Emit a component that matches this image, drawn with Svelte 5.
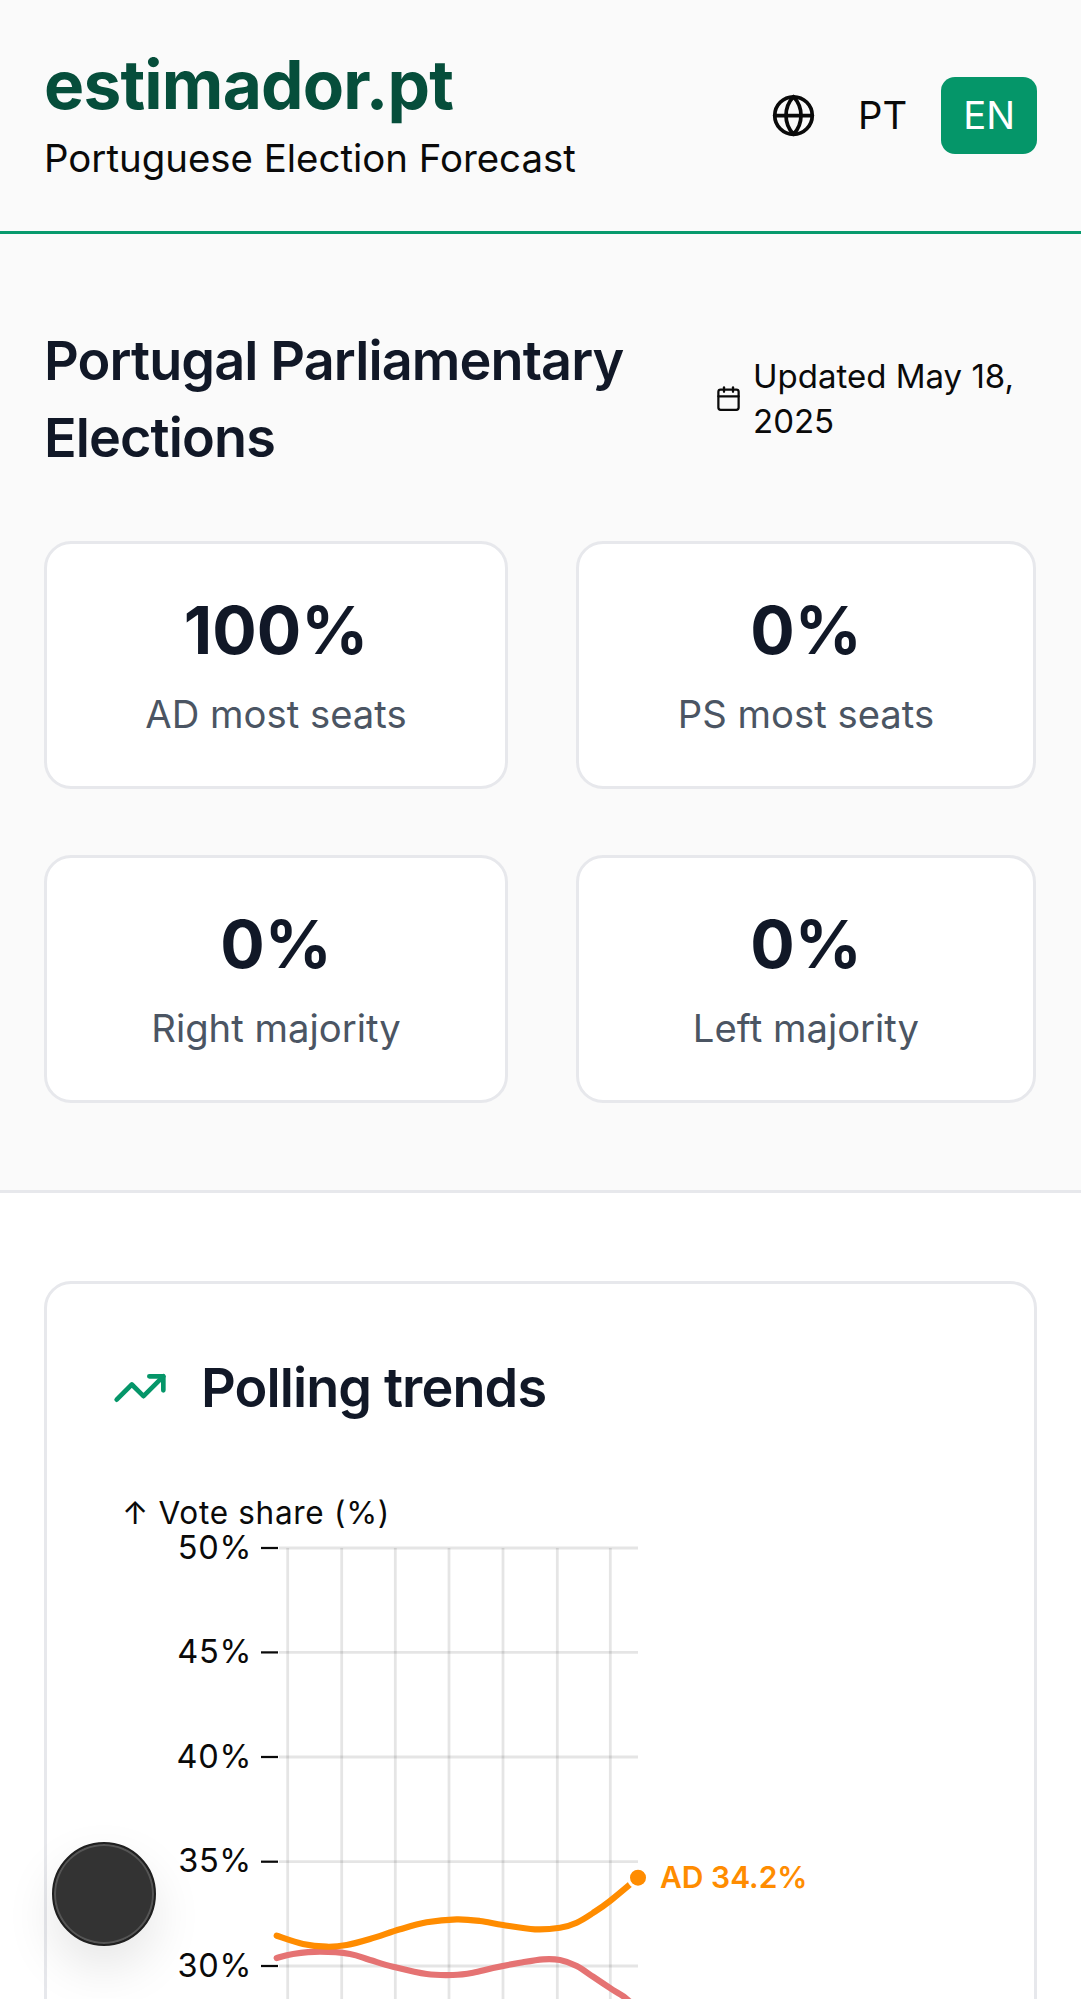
<script>
  const stats = [
    { value: '100%', label: 'AD most seats' },
    { value: '0%', label: 'PS most seats' },
    { value: '0%', label: 'Right majority' },
    { value: '0%', label: 'Left majority' }
  ];
  const ticks = [
    { label: '50%', y: 1548 },
    { label: '45%', y: 1652.4 },
    { label: '40%', y: 1757 },
    { label: '35%', y: 1861.7 },
    { label: '30%', y: 1966 }
  ];
  const gridX = [287.7, 341.7, 395.3, 449, 503, 557.3, 610.3];
  const orange = [[276.7,1935.7],[303,1944],[326.7,1946.7],[346.7,1945],[370,1939],[400,1929.3],[426.7,1922.3],[456.7,1919.3],[480,1921],[503,1925],[535,1929.3],[560,1927.7],[576.7,1922.7],[593,1913],[610,1901],[638,1877.7]];
  const red = [[276.7,1958],[293,1954],[320,1951.7],[350,1954],[370,1960],[393,1966.7],[426.7,1974],[453,1975],[473,1972.7],[493,1968],[520,1962.7],[543,1959.3],[560,1960],[576.7,1966],[593,1976.7],[613,1990],[628,2000],[660,2030]];

  function spline(p) {
    let d = `M${p[0][0]} ${p[0][1]}`;
    for (let i = 0; i < p.length - 1; i++) {
      const a = p[Math.max(i - 1, 0)], b = p[i], c = p[i + 1], e = p[Math.min(i + 2, p.length - 1)];
      const c1 = [b[0] + (c[0] - a[0]) / 6, b[1] + (c[1] - a[1]) / 6];
      const c2 = [c[0] - (e[0] - b[0]) / 6, c[1] - (e[1] - b[1]) / 6];
      d += `C${c1[0].toFixed(1)} ${c1[1].toFixed(1)} ${c2[0].toFixed(1)} ${c2[1].toFixed(1)} ${c[0]} ${c[1]}`;
    }
    return d;
  }
</script>

<div class="page">
  <header class="header">
    <div class="brand">
      <h1>estimador.pt</h1>
      <p>Portuguese Election Forecast</p>
    </div>
    <div class="lang">
      <svg class="globe" viewBox="0 0 24 24" fill="none" stroke="currentColor" stroke-width="2" stroke-linecap="round" stroke-linejoin="round">
        <circle cx="12" cy="12" r="10" />
        <path d="M12 2a14.5 14.5 0 0 0 0 20 14.5 14.5 0 0 0 0-20" />
        <path d="M2 12h20" />
      </svg>
      <button class="lang-btn">PT</button>
      <button class="lang-btn active">EN</button>
    </div>
  </header>

  <section class="summary">
    <div class="title-row">
      <h2>Portugal Parliamentary Elections</h2>
      <div class="updated">
        <svg class="calendar" viewBox="0 0 24 24" fill="none" stroke="currentColor" stroke-width="2" stroke-linecap="round" stroke-linejoin="round">
          <path d="M8 2v4" /><path d="M16 2v4" />
          <rect x="3" y="4" width="18" height="18" rx="2" />
          <path d="M3 10h18" />
        </svg>
        <span>Updated May 18, 2025</span>
      </div>
    </div>
    <div class="stats">
      {#each stats as s}
        <div class="stat">
          <div class="value">{s.value}</div>
          <div class="label">{s.label}</div>
        </div>
      {/each}
    </div>
  </section>

  <main class="content">
    <div class="card">
      <div class="card-head">
        <svg class="trend" viewBox="0 0 24 24" fill="none" stroke="currentColor" stroke-width="2" stroke-linecap="round" stroke-linejoin="round">
          <polyline points="22 7 13.5 15.5 8.5 10.5 2 17" />
          <polyline points="16 7 22 7 22 13" />
        </svg>
        <h3>Polling trends</h3>
      </div>
      <svg class="chart" viewBox="100 1470 880 600" width="880" height="600">
        <text class="axis" x="122" y="1524">↑ Vote share (%)</text>
        {#each gridX as x}
          <line class="grid" x1={x} x2={x} y1="1548" y2="2070" />
        {/each}
        {#each ticks as t}
          <line class="grid" x1="279" x2="638" y1={t.y} y2={t.y} />
          <line class="tick" x1="261" x2="278" y1={t.y} y2={t.y} />
          <text class="axis tick-label" x="252" y={t.y + 10.5} text-anchor="end">{t.label}</text>
        {/each}
        <path class="series" d={spline(red)} stroke="#e57373" />
        <path class="series" d={spline(orange)} stroke="#ff8c00" />
        <circle cx="638" cy="1877.7" r="11" fill="#fff" />
        <circle cx="638" cy="1877.7" r="8" fill="#ff8c00" />
        <text class="end-label" x="660" y="1887.5">AD 34.2%</text>
      </svg>
    </div>
  </main>

  <button class="fab" aria-label="Open"></button>
</div>

<style>
  :global(body) {
    margin: 0;
    background: #fff;
  }
  .page {
    position: relative;
    height: 1999px;
    overflow: hidden;
    font-family: Inter, "Liberation Sans", sans-serif;
    color: #0a0a0a;
    background: #fff;
  }
  .header {
    box-sizing: border-box;
    height: 234px;
    padding: 0 44px;
    display: flex;
    align-items: center;
    justify-content: space-between;
    background: #fafafa;
    border-bottom: 3px solid #079a6d;
  }
  .brand {
    padding-top: 3px;
  }
  h1 {
    margin: 0;
    font-size: 67.5px;
    line-height: 72px;
    font-weight: 700;
    letter-spacing: -0.8px;
    color: #064e3b;
  }
  .brand p {
    margin: 10px 0 0;
    font-size: 38.4px;
    line-height: 54px;
  }
  .lang {
    display: flex;
    align-items: center;
    gap: 12px;
    margin-bottom: 1px;
  }
  .globe {
    width: 45px;
    height: 45px;
    margin-right: 8.5px;
    color: #0a0a0a;
  }
  .lang-btn {
    box-sizing: border-box;
    height: 77px;
    padding: 0 22px;
    border: 0;
    border-radius: 14px;
    background: transparent;
    color: #0a0a0a;
    font: 400 38.25px Inter, sans-serif;
  }
  .lang-btn.active {
    background: #059669;
    color: #fff;
  }
  .summary {
    box-sizing: border-box;
    height: 959px;
    padding: 89px 44px 0;
    background: #fafafa;
    border-bottom: 3px solid #e7e8ec;
  }
  .title-row {
    display: flex;
    align-items: center;
    justify-content: space-between;
    gap: 60px;
  }
  h2 {
    margin: 0;
    flex: 0 0 600px;
    font-size: 54px;
    line-height: 76.5px;
    font-weight: 600;
    letter-spacing: -0.9px;
    color: #111827;
  }
  .updated {
    display: flex;
    align-items: center;
    gap: 11px;
    width: 322px;
    font-size: 33px;
    line-height: 45px;
    margin-top: -2px;
  }
  .calendar {
    flex: none;
    width: 27px;
    height: 27px;
  }
  .stats {
    margin-top: 65px;
    margin-right: 1px;
    display: grid;
    grid-template-columns: 464fr 460fr;
    gap: 66px 68px;
  }
  .stat {
    box-sizing: border-box;
    height: 248px;
    padding: 48px 20px 0;
    text-align: center;
    background: #fff;
    border: 3px solid #e7e8ec;
    border-radius: 27px;
  }
  .value {
    font-size: 66px;
    line-height: 76px;
    font-weight: 700;
    color: #111827;
  }
  .label {
    margin-top: 19px;
    font-size: 38.25px;
    line-height: 54px;
    color: #4b5563;
  }
  .content {
    padding: 88px 44px 0;
    background: #fff;
  }
  .card {
    box-sizing: border-box;
    height: 1000px;
    padding: 66px 0 0 53px;
    border: 3px solid #e7e8ec;
    border-radius: 27px;
    background: #fff;
  }
  .card-head {
    display: flex;
    align-items: center;
    gap: 33px;
    margin-left: 12px;
  }
  .trend {
    width: 56px;
    height: 56px;
    color: #059669;
  }
  h3 {
    margin: 0;
    font-size: 54px;
    line-height: 76px;
    font-weight: 600;
    letter-spacing: -0.9px;
    color: #111827;
  }
  .chart {
    display: block;
    margin-top: 44px;
  }
  .axis {
    font-size: 31.5px;
    letter-spacing: 0.7px;
    fill: #0a0a0a;
  }
  .tick-label {
    font-size: 32.5px;
  }
  .grid {
    stroke: #000;
    stroke-opacity: 0.1;
    stroke-width: 2.8;
  }
  .tick {
    stroke: #0a0a0a;
    stroke-width: 2.25;
  }
  .series {
    fill: none;
    stroke-width: 6.2;
    stroke-linecap: round;
    stroke-linejoin: round;
  }
  .end-label {
    font-size: 30px;
    font-weight: 600;
    fill: #ff8c00;
  }
  .fab {
    position: absolute;
    left: 52px;
    top: 1842px;
    box-sizing: border-box;
    width: 104px;
    height: 104px;
    padding: 0;
    border-radius: 50%;
    border: 2px solid #1f1f1f;
    background: #333;
    box-shadow: inset 0 0 0 2px #555, 0 22px 50px rgba(0, 0, 0, 0.1);
  }
</style>
